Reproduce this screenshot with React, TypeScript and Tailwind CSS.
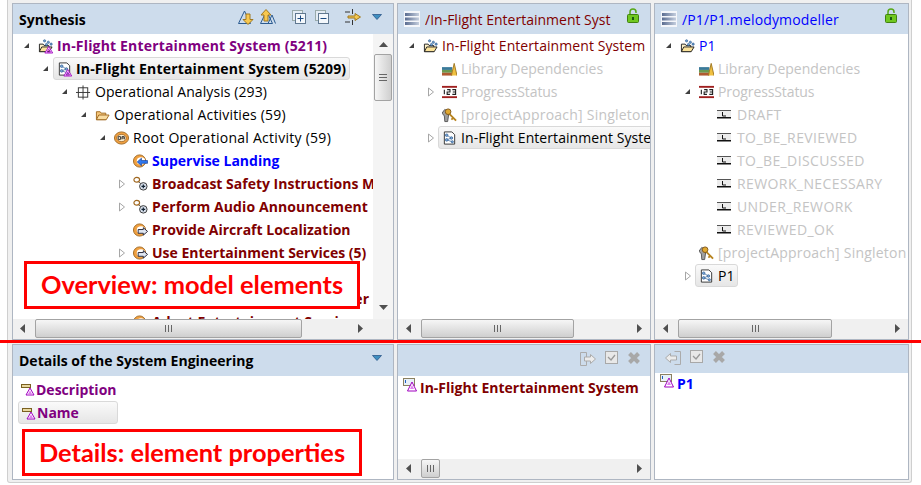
import type { ReactNode } from 'react';

const font = "font-['Open_Sans','Noto_Sans',sans-serif]";

function Expanded() {
  return <svg width="7" height="7" viewBox="0 0 7 7"><path d="M6 1v5H1z" fill="#404040" /></svg>;
}
function Collapsed() {
  return <svg width="6" height="10" viewBox="0 0 6 10"><path d="M.5 1l5 4-5 4z" fill="#fff" stroke="#a6a6a6" /></svg>;
}
function Warn() {
  return <path d="M11.500 8.500l4.200 7h-8.400z M11.500 11.500l1.800 3h-3.600z" fill="#f8d0ff" fillRule="evenodd" stroke="#a000c0" strokeWidth=".9" />;
}
function Dots() {
  return (
    <g fill="#6fa0d0" stroke="#2a5a90" strokeWidth=".7">
      <circle cx="7" cy="2.500" r="1.200" /><circle cx="11" cy="4" r="1.200" /><circle cx="14" cy="6" r="1.200" /><circle cx="9" cy="6.500" r="1.200" />
    </g>
  );
}
function FolderOpen({ dots, warn }: { dots?: boolean; warn?: boolean }) {
  return (
    <svg width="16" height="16" viewBox="0 0 16 16">
      <path d="M1.500 14V6h4l1 1.500h5V14z" fill="#fff3c8" stroke="#222" />
      <path d="M1.500 14l2.500-5h11l-3 5z" fill="#fbe39a" stroke="#222" />
      {dots && <Dots />}
      {warn && <Warn />}
    </svg>
  );
}
function OrangeFolder() {
  return (
    <svg width="16" height="16" viewBox="0 0 16 16">
      <path d="M1.500 13V4.500h4l1 1.500h5v7z" fill="#f6c77a" stroke="#a06a20" />
      <path d="M1.500 13l2.500-5h11l-3 5z" fill="#f9dca0" stroke="#a06a20" />
    </svg>
  );
}
function Doc({ warn }: { warn?: boolean }) {
  return (
    <svg width="16" height="16" viewBox="0 0 16 16">
      <path d="M2.500 1.500h8l3 3v10h-11z" fill="#fff" stroke="#333" />
      <path d="M5 5l5 3-5 2 6 2" fill="none" stroke="#2a5a90" strokeWidth=".7" />
      <g fill="#7aa6d6" stroke="#2a5a90" strokeWidth=".7">
        <circle cx="5" cy="5" r="1.400" /><circle cx="5" cy="10" r="1.400" /><circle cx="10" cy="8" r="1.400" /><circle cx="11" cy="12" r="1.200" />
      </g>
      {warn && <Warn />}
    </svg>
  );
}
function Cross() {
  return (
    <svg width="16" height="16" viewBox="0 0 16 16" fill="none" stroke="#333">
      <rect x="2.500" y="3.500" width="10" height="10" /><path d="M7.500 1v15M0 8.500h15" />
    </svg>
  );
}
function OaBall() {
  return (
    <svg width="16" height="16" viewBox="0 0 16 16">
      <ellipse cx="8" cy="8" rx="7.500" ry="6.500" fill="#f0a040" stroke="#a06820" />
      <ellipse cx="8" cy="8" rx="5" ry="3.800" fill="#fff0d0" stroke="#704010" strokeWidth=".6" />
      <path d="M4.500 6.500h2.500v3H4.500zM8.500 9.500v-3h2.500v3M8.500 8h2.500" fill="none" stroke="#333" />
    </svg>
  );
}
function Activity({ left }: { left?: boolean }) {
  return (
    <svg width="16" height="16" viewBox="0 0 16 16">
      <ellipse cx="7" cy="8" rx="6.500" ry="6.500" fill="#f0a040" stroke="#a06820" />
      <ellipse cx="8.500" cy="8" rx="4.500" ry="4" fill="#fff" />
      {left
        ? <path d="M4.500 9L9 5v2.500h6.500v3H9V13z" fill="#2f78f0" stroke="#123a90" strokeWidth=".7" />
        : <path d="M15.500 9.500L11 5.500V7.500H5.500v4H11v2z" fill="#dfe6f2" stroke="#223" />}
    </svg>
  );
}
function FuncGroup() {
  return (
    <svg width="16" height="16" viewBox="0 0 16 16">
      <path d="M4 4l6 5" stroke="#555" />
      <ellipse cx="4" cy="3.500" rx="3" ry="2.500" fill="#fff" stroke="#a06820" strokeWidth="1.300" />
      <circle cx="11" cy="10.500" r="4" fill="#d8e0ec" stroke="#333" />
      <path d="M11 8.500v4M9 10.500h4" stroke="#123" strokeWidth="1.300" />
    </svg>
  );
}
function Books() {
  return (
    <svg width="16" height="16" viewBox="0 0 16 16">
      <rect x="0" y="6" width="11" height="3" fill="#3a7a9a" /><rect x="0" y="9" width="11" height="3" fill="#6a9a50" /><rect x="0" y="12" width="11" height="3" fill="#b05a30" />
      <path d="M10 15l3-13 3 13" fill="#f0c040" stroke="#a07820" />
    </svg>
  );
}
function Enum123() {
  return (
    <svg width="16" height="16" viewBox="0 0 16 16">
      <rect y="1.500" width="16" height="2" fill="#a02020" /><rect y="12.500" width="16" height="2" fill="#a02020" />
      <path d="M2.500 5.500v5M5.500 5.500h3v2.500h-3v2.500h3M11 5.500h3.500v5H11M11.500 8h3" fill="none" stroke="#222" strokeWidth="1.200" />
    </svg>
  );
}
function Key() {
  return (
    <svg width="16" height="16" viewBox="0 0 16 16">
      <path d="M3 2l3 2 1 4-1 7H3l-.5-6L0 6z" fill="#a0a0a0" stroke="#555" />
      <path d="M7 6l8 8M12 11l-2 2" fill="none" stroke="#b88420" strokeWidth="2" />
      <circle cx="6.500" cy="4.500" r="3" fill="#e0a830" stroke="#80581a" />
    </svg>
  );
}
function Literal() {
  return (
    <svg width="14" height="16" viewBox="0 0 14 16" className="-ml-[3px]">
      <rect y="3" width="14" height="1" fill="#555" />
      <rect y="4" width="14" height="6" fill="#ececec" /><rect y="10" width="14" height="1.500" fill="#111" />
      <path d="M5.500 5v4h3.500" fill="none" stroke="#111" />
    </svg>
  );
}
function Lock() {
  return (
    <svg width="12" height="16" viewBox="0 0 12 16">
      <path d="M3 8V4a3 3 0 0 1 6 0v1" fill="none" stroke="#58a818" strokeWidth="1.500" />
      <rect x=".5" y="6.500" width="11" height="8" rx="1" fill="#70c820" stroke="#408010" />
      <rect x="5" y="9" width="2" height="3" fill="#1a5a10" />
    </svg>
  );
}
function Stack() {
  return (
    <svg width="16" height="16" viewBox="0 0 16 16">
      <defs>
        <linearGradient id="stackBar"><stop offset="0" stopColor="#5a6c90" /><stop offset="1" stopColor="#c4cede" /></linearGradient>
      </defs>
      <rect width="16" height="16" fill="#f4f6fa" />
      <rect x="1" y="2" width="14" height="3" fill="url(#stackBar)" /><rect x="1" y="6.500" width="14" height="3" fill="url(#stackBar)" /><rect x="1" y="11" width="14" height="3" fill="url(#stackBar)" />
    </svg>
  );
}
function Dropdown() {
  return (
    <svg width="10" height="6" viewBox="0 0 10 6"><path d="M.5.5h9L5 5.500z" fill="#3f8fc0" stroke="#204a80" strokeWidth=".7" /></svg>
  );
}
function TreeTool({ up }: { up?: boolean }) {
  return (
    <svg width="16" height="16" viewBox="0 0 16 16" fill="none" stroke="#2a5a90">
      <path d="M.5 14.500L6.500 2l6 12.500z" />
      {up && <path d="M8 14.500L12 6l3.500 8.500" />}
      <path d={up ? 'M6 .5L1 6h3v6h4V6h3z' : 'M10 15.500l5-5h-3V5H8v5.500H5z'} fill="#f8c850" stroke="#a07820" />
    </svg>
  );
}
function BoxTool({ plus }: { plus?: boolean }) {
  return (
    <svg width="14" height="14" viewBox="0 0 14 14">
      <rect x=".5" y=".5" width="10" height="10" fill="#e4ecf4" stroke="#9aa" />
      <rect x="3.500" y="3.500" width="10" height="10" fill="#f4f8fc" stroke="#607890" />
      <path d={plus ? 'M5.500 8.500h6M8.500 5.500v6' : 'M5.500 8.500h6'} stroke="#1c4a80" />
    </svg>
  );
}
function SyncTool() {
  return (
    <svg width="16" height="16" viewBox="0 0 16 16">
      <path d="M0 3h5M0 13h5M7.500 0v5M7.500 11v5" stroke="#333" fill="none" />
      <path d="M3 7h7V4.500L15.500 8 10 11.500V9H3z" fill="#f4c850" stroke="#a07820" />
    </svg>
  );
}
function GreyMove({ left }: { left?: boolean }) {
  return (
    <svg width="16" height="16" viewBox="0 0 16 16" fill="none" stroke="#ababab">
      <path d={left ? 'M9.500 1.500h6v13h-6' : 'M.5 1.500h6v13h-6z'} />
      <path d={left ? 'M.5 8l5-4.500v2.500h6v4h-6v2.500z' : 'M15.500 8l-5-4.500v2.500h-6v4h6v2.500z'} fill="#ececec" />
    </svg>
  );
}
function GreyCheck() {
  return (
    <svg width="13" height="13" viewBox="0 0 13 13" fill="none">
      <rect x=".5" y=".5" width="12" height="12" fill="#e8e8e8" stroke="#a8a8a8" />
      <path d="M3 6l3 3 4-5" stroke="#999" strokeWidth="1.300" />
    </svg>
  );
}
function GreyX() {
  return (
    <svg width="14" height="14" viewBox="0 0 14 14"><path d="M2.500 2.500l9 9M11.500 2.500l-9 9" stroke="#a8a8a8" strokeWidth="4" /></svg>
  );
}
function Attr() {
  return (
    <svg width="14" height="14" viewBox="0 0 14 14">
      <rect x=".5" y="2.500" width="9" height="3" fill="#e8d8a0" stroke="#7a6020" />
      <path d="M9 6l4 7H5z" fill="#fff" stroke="#a000c0" />
      <path d="M9 8.500l2 3.500H7z" fill="#e080f0" />
    </svg>
  );
}
function RootAttr() {
  return (
    <svg width="14" height="14" viewBox="0 0 14 14">
      <rect x=".5" y=".5" width="11" height="7" fill="#e8f0f8" stroke="#8a8060" />
      <path d="M2.500 2v3" stroke="#2060c0" />
      <path d="M9 4l4.500 9h-9z" fill="#fff" stroke="#a000c0" />
      <path d="M9 7l2 4H7z" fill="#e080f0" />
    </svg>
  );
}

function Row({ depth, arrow, icon, label, cls, selected }: {
  depth: number; arrow?: 'open' | 'closed'; icon?: ReactNode; label?: string; cls: string; selected?: boolean;
}) {
  return (
    <div className="flex h-[23px] items-center whitespace-nowrap" style={{ paddingLeft: 6 + depth * 19 }}>
      <span className="flex w-[15px] shrink-0 justify-center">{arrow === 'open' ? <Expanded /> : arrow === 'closed' ? <Collapsed /> : null}</span>
      <span className={`flex h-[23px] items-center gap-[4px] rounded-[3px] border px-[3px] ${selected ? 'border-[#d9d9d9] bg-gradient-to-b from-[#fafafa] to-[#e6e6e6]' : 'border-transparent'}`}>
        <span className="flex w-[15px] shrink-0 justify-center">{icon}</span>
        <span className={`text-[14px] ${cls}`}>{label}</span>
      </span>
    </div>
  );
}

function Arrow({ dir }: { dir: 'left' | 'right' | 'up' | 'down' }) {
  const d = { left: 'M5 0v9L0 4.500z', right: 'M0 0v9l5-4.500z', up: 'M0 5h9L4.500 0z', down: 'M0 0h9L4.500 5z' }[dir];
  return <svg width={dir === 'left' || dir === 'right' ? 5 : 9} height={dir === 'left' || dir === 'right' ? 9 : 5} className="shrink-0"><path d={d} fill="#505050" /></svg>;
}

function HScroll({ thumb, arrowPad }: { thumb: string; arrowPad: string }) {
  return (
    <div className={`flex h-[20px] shrink-0 items-start bg-[#f0f0f0] ${arrowPad}`}>
      <span className="mt-[5px]"><Arrow dir="left" /></span>
      <div className={`ml-[10px] flex h-[19px] items-center justify-center gap-[2px] rounded-[2px] border border-[#a3a3a3] bg-gradient-to-b from-[#f6f6f6] to-[#cfcfcf] ${thumb}`}>
        <i className="h-[7px] w-px bg-[#666]" /><i className="h-[7px] w-px bg-[#666]" /><i className="h-[7px] w-px bg-[#666]" />
      </div>
      <span className="mt-[5px] ml-auto"><Arrow dir="right" /></span>
    </div>
  );
}

function VScroll() {
  return (
    <div className="flex w-[20px] shrink-0 flex-col items-center bg-[#f4f4f4] pt-[8px] pb-[9px]">
      <Arrow dir="up" />
      <div className="mt-[7px] flex h-[47px] w-[18px] flex-col items-center justify-center gap-[2px] rounded-[2px] border border-[#a3a3a3] bg-gradient-to-r from-[#f6f6f6] to-[#cfcfcf]">
        <i className="h-px w-[8px] bg-[#666]" /><i className="h-px w-[8px] bg-[#666]" /><i className="h-px w-[8px] bg-[#666]" />
      </div>
      <span className="mt-auto"><Arrow dir="down" /></span>
    </div>
  );
}

function Panel({ children }: { children: ReactNode }) {
  return <div className="flex min-w-0 flex-col overflow-hidden border border-[#aeb6c2] bg-white">{children}</div>;
}

const purple = 'font-bold text-[#800080]';
const maroon = 'font-bold text-[#800000]';
const grey = 'text-[#c4c4c4]';
const literals = ['DRAFT', 'TO_BE_REVIEWED', 'TO_BE_DISCUSSED', 'REWORK_NECESSARY', 'UNDER_REWORK', 'REVIEWED_OK'];

export default function App() {
  return (
    <div className={`relative h-[485px] w-[921px] overflow-hidden bg-white ${font}`}>
      <div className="ml-[7px] h-[483px] w-[905px] rounded-b-[3px] border-r border-b border-l border-[#cfcfcf] bg-[#f0f0f0] pt-[3px] pl-[4px]">
        <div className="grid grid-cols-[382px_254px_255px] grid-rows-[337px_136px] gap-x-[3px] gap-y-[4px]">
          <Panel>
            <div className="flex h-[30px] shrink-0 items-center bg-[#cddcec] pl-[6px]">
              <span className="pt-[1px] text-[14px] font-bold text-black">Synthesis</span>
              <div className="mb-[4px] ml-auto flex items-center pr-[11px]">
                <TreeTool /><span className="ml-[6px]"><TreeTool up /></span>
                <span className="ml-[16px]"><BoxTool plus /></span><span className="ml-[9px]"><BoxTool /></span>
                <span className="ml-[16px]"><SyncTool /></span><span className="ml-[11px]"><Dropdown /></span>
              </div>
            </div>
            <div className="flex min-h-0 flex-1">
              <div className="min-w-0 flex-1 overflow-hidden">
                <Row depth={0} arrow="open" icon={<FolderOpen dots warn />} label="In-Flight Entertainment System (5211)" cls={`tracking-[0.17px] ${purple}`} />
                <Row depth={1} arrow="open" icon={<Doc warn />} label="In-Flight Entertainment System (5209)" cls="font-bold tracking-[0.17px] text-black" selected />
                <Row depth={2} arrow="open" icon={<Cross />} label="Operational Analysis (293)" cls="tracking-[0.08px] text-black" />
                <Row depth={3} arrow="open" icon={<OrangeFolder />} label="Operational Activities (59)" cls="tracking-[0.18px] text-black" />
                <Row depth={4} arrow="open" icon={<OaBall />} label="Root Operational Activity (59)" cls="tracking-[0.27px] text-black" />
                <Row depth={5} icon={<Activity left />} label="Supervise Landing" cls="font-bold text-[#0000ff]" />
                <Row depth={5} arrow="closed" icon={<FuncGroup />} label="Broadcast Safety Instructions Messages" cls={maroon} />
                <Row depth={5} arrow="closed" icon={<FuncGroup />} label="Perform Audio Announcement" cls={`tracking-[0.1px] ${maroon}`} />
                <Row depth={5} icon={<Activity />} label="Provide Aircraft Localization" cls={maroon} />
                <Row depth={5} arrow="closed" icon={<Activity />} label="Use Entertainment Services (5)" cls={maroon} />
                <Row depth={5} cls={maroon} />
                <Row depth={5} icon={<Activity />} label="Monitor Entertainment Server" cls={`tracking-[0.2px] ${maroon}`} />
                <Row depth={5} icon={<Activity />} label="Adapt Entertainment Services" cls={maroon} />
              </div>
              <VScroll />
            </div>
            <HScroll thumb="w-[267px]" arrowPad="pl-[7px] pr-[30px]" />
          </Panel>

          <Panel>
            <div className="flex h-[30px] shrink-0 items-center bg-[#cddcec] pl-[6px]">
              <span className="shrink-0"><Stack /></span>
              <span className="ml-[5px] w-[186px] overflow-hidden text-[14px] whitespace-nowrap text-[#800000]">/In-Flight Entertainment System</span>
              <span className="mb-[6px] ml-[16px]"><Lock /></span>
            </div>
            <div className="min-h-0 flex-1 overflow-hidden">
              <Row depth={0} arrow="open" icon={<FolderOpen dots />} label="In-Flight Entertainment System" cls="tracking-[0.07px] text-[#800000]" />
              <Row depth={1} icon={<Books />} label="Library Dependencies" cls={grey} />
              <Row depth={1} arrow="closed" icon={<Enum123 />} label="ProgressStatus" cls={`tracking-[-0.1px] ${grey}`} />
              <Row depth={1} icon={<Key />} label="[projectApproach] Singleton" cls={`tracking-[0.22px] ${grey}`} />
              <Row depth={1} arrow="closed" icon={<Doc />} label="In-Flight Entertainment System" cls="tracking-[0.07px] text-black" selected />
            </div>
            <HScroll thumb="w-[153px]" arrowPad="pl-[8px] pr-[8px]" />
          </Panel>

          <Panel>
            <div className="flex h-[30px] shrink-0 items-center bg-[#cddcec] pl-[6px]">
              <span className="shrink-0"><Stack /></span>
              <span className="ml-[5px] text-[14px] tracking-[0.15px] text-[#0000ff]">/P1/P1.melodymodeller</span>
              <span className="mr-[11px] mb-[6px] ml-auto"><Lock /></span>
            </div>
            <div className="min-h-0 flex-1 overflow-hidden">
              <Row depth={0} arrow="open" icon={<FolderOpen dots />} label="P1" cls="text-[#0000ff]" />
              <Row depth={1} icon={<Books />} label="Library Dependencies" cls={grey} />
              <Row depth={1} arrow="open" icon={<Enum123 />} label="ProgressStatus" cls={`tracking-[-0.1px] ${grey}`} />
              {literals.map((l) => <Row key={l} depth={2} icon={<Literal />} label={l} cls={`tracking-[0.4px] ${grey}`} />)}
              <Row depth={1} icon={<Key />} label="[projectApproach] Singleton" cls={`tracking-[0.22px] ${grey}`} />
              <Row depth={1} arrow="closed" icon={<Doc />} label="P1" cls="text-black" selected />
            </div>
            <HScroll thumb="w-[154px]" arrowPad="pl-[8px] pr-[8px]" />
          </Panel>

          <Panel>
            <div className="flex h-[31px] shrink-0 items-center bg-[#cddcec] pr-[11px] pl-[6px]">
              <span className="text-[14px] font-bold text-black">Details of the System Engineering</span>
              <span className="mb-[6px] ml-auto"><Dropdown /></span>
            </div>
            <div className="flex flex-col items-start pt-[1px] pl-[5px]">
              <div className="flex h-[24px] items-center gap-[1px] pl-[3px]"><Attr /><span className={`text-[14px] ${purple}`}>Description</span></div>
              <div className="flex h-[23px] w-[100px] items-center gap-[1px] rounded-[3px] border border-[#d9d9d9] bg-gradient-to-b from-[#fafafa] to-[#e6e6e6] pl-[3px]"><Attr /><span className={`text-[14px] ${purple}`}>Name</span></div>
            </div>
          </Panel>

          <Panel>
            <div className="flex h-[31px] shrink-0 items-start justify-end gap-[9px] bg-[#cddcec] pt-[6px] pr-[9px]">
              <GreyMove /><GreyCheck /><GreyX />
            </div>
            <div className="flex flex-1 items-start pt-[1px] pl-[5px]">
              <span className="mt-[1px]"><RootAttr /></span>
              <span className={`ml-[3px] text-[14px] whitespace-nowrap ${maroon}`}>In-Flight Entertainment System</span>
            </div>
            <HScroll thumb="w-[19px]" arrowPad="pl-[8px] pr-[8px]" />
          </Panel>

          <Panel>
            <div className="flex h-[28px] shrink-0 items-start gap-[9px] bg-[#cddcec] pt-[5px] pl-[10px]">
              <GreyMove left /><GreyCheck /><GreyX />
            </div>
            <div className="flex items-start pl-[5px]">
              <span className="mt-[1px]"><RootAttr /></span>
              <span className="ml-[3px] text-[14px] font-bold text-[#0000ff]">P1</span>
            </div>
          </Panel>
        </div>
      </div>

      {/* annotations drawn over the screenshot */}
      <div className="absolute top-[340px] left-0 h-[3px] w-[921px] bg-[#ff0000]" />
      <div className="absolute top-[261px] left-[24px] flex h-[48px] w-[336px] items-center justify-center border-[3px] border-[#ff0000] bg-white pb-[1px] font-['Lato',sans-serif] text-[25.4px] font-bold text-[#ff0000]">
        Overview: model elements
      </div>
      <div className="absolute top-[429px] left-[22px] flex h-[47px] w-[340px] items-center justify-center border-[3px] border-[#ff0000] bg-white pb-[1px] font-['Lato',sans-serif] text-[25.4px] font-bold text-[#ff0000]">
        Details: element properties
      </div>
    </div>
  );
}
